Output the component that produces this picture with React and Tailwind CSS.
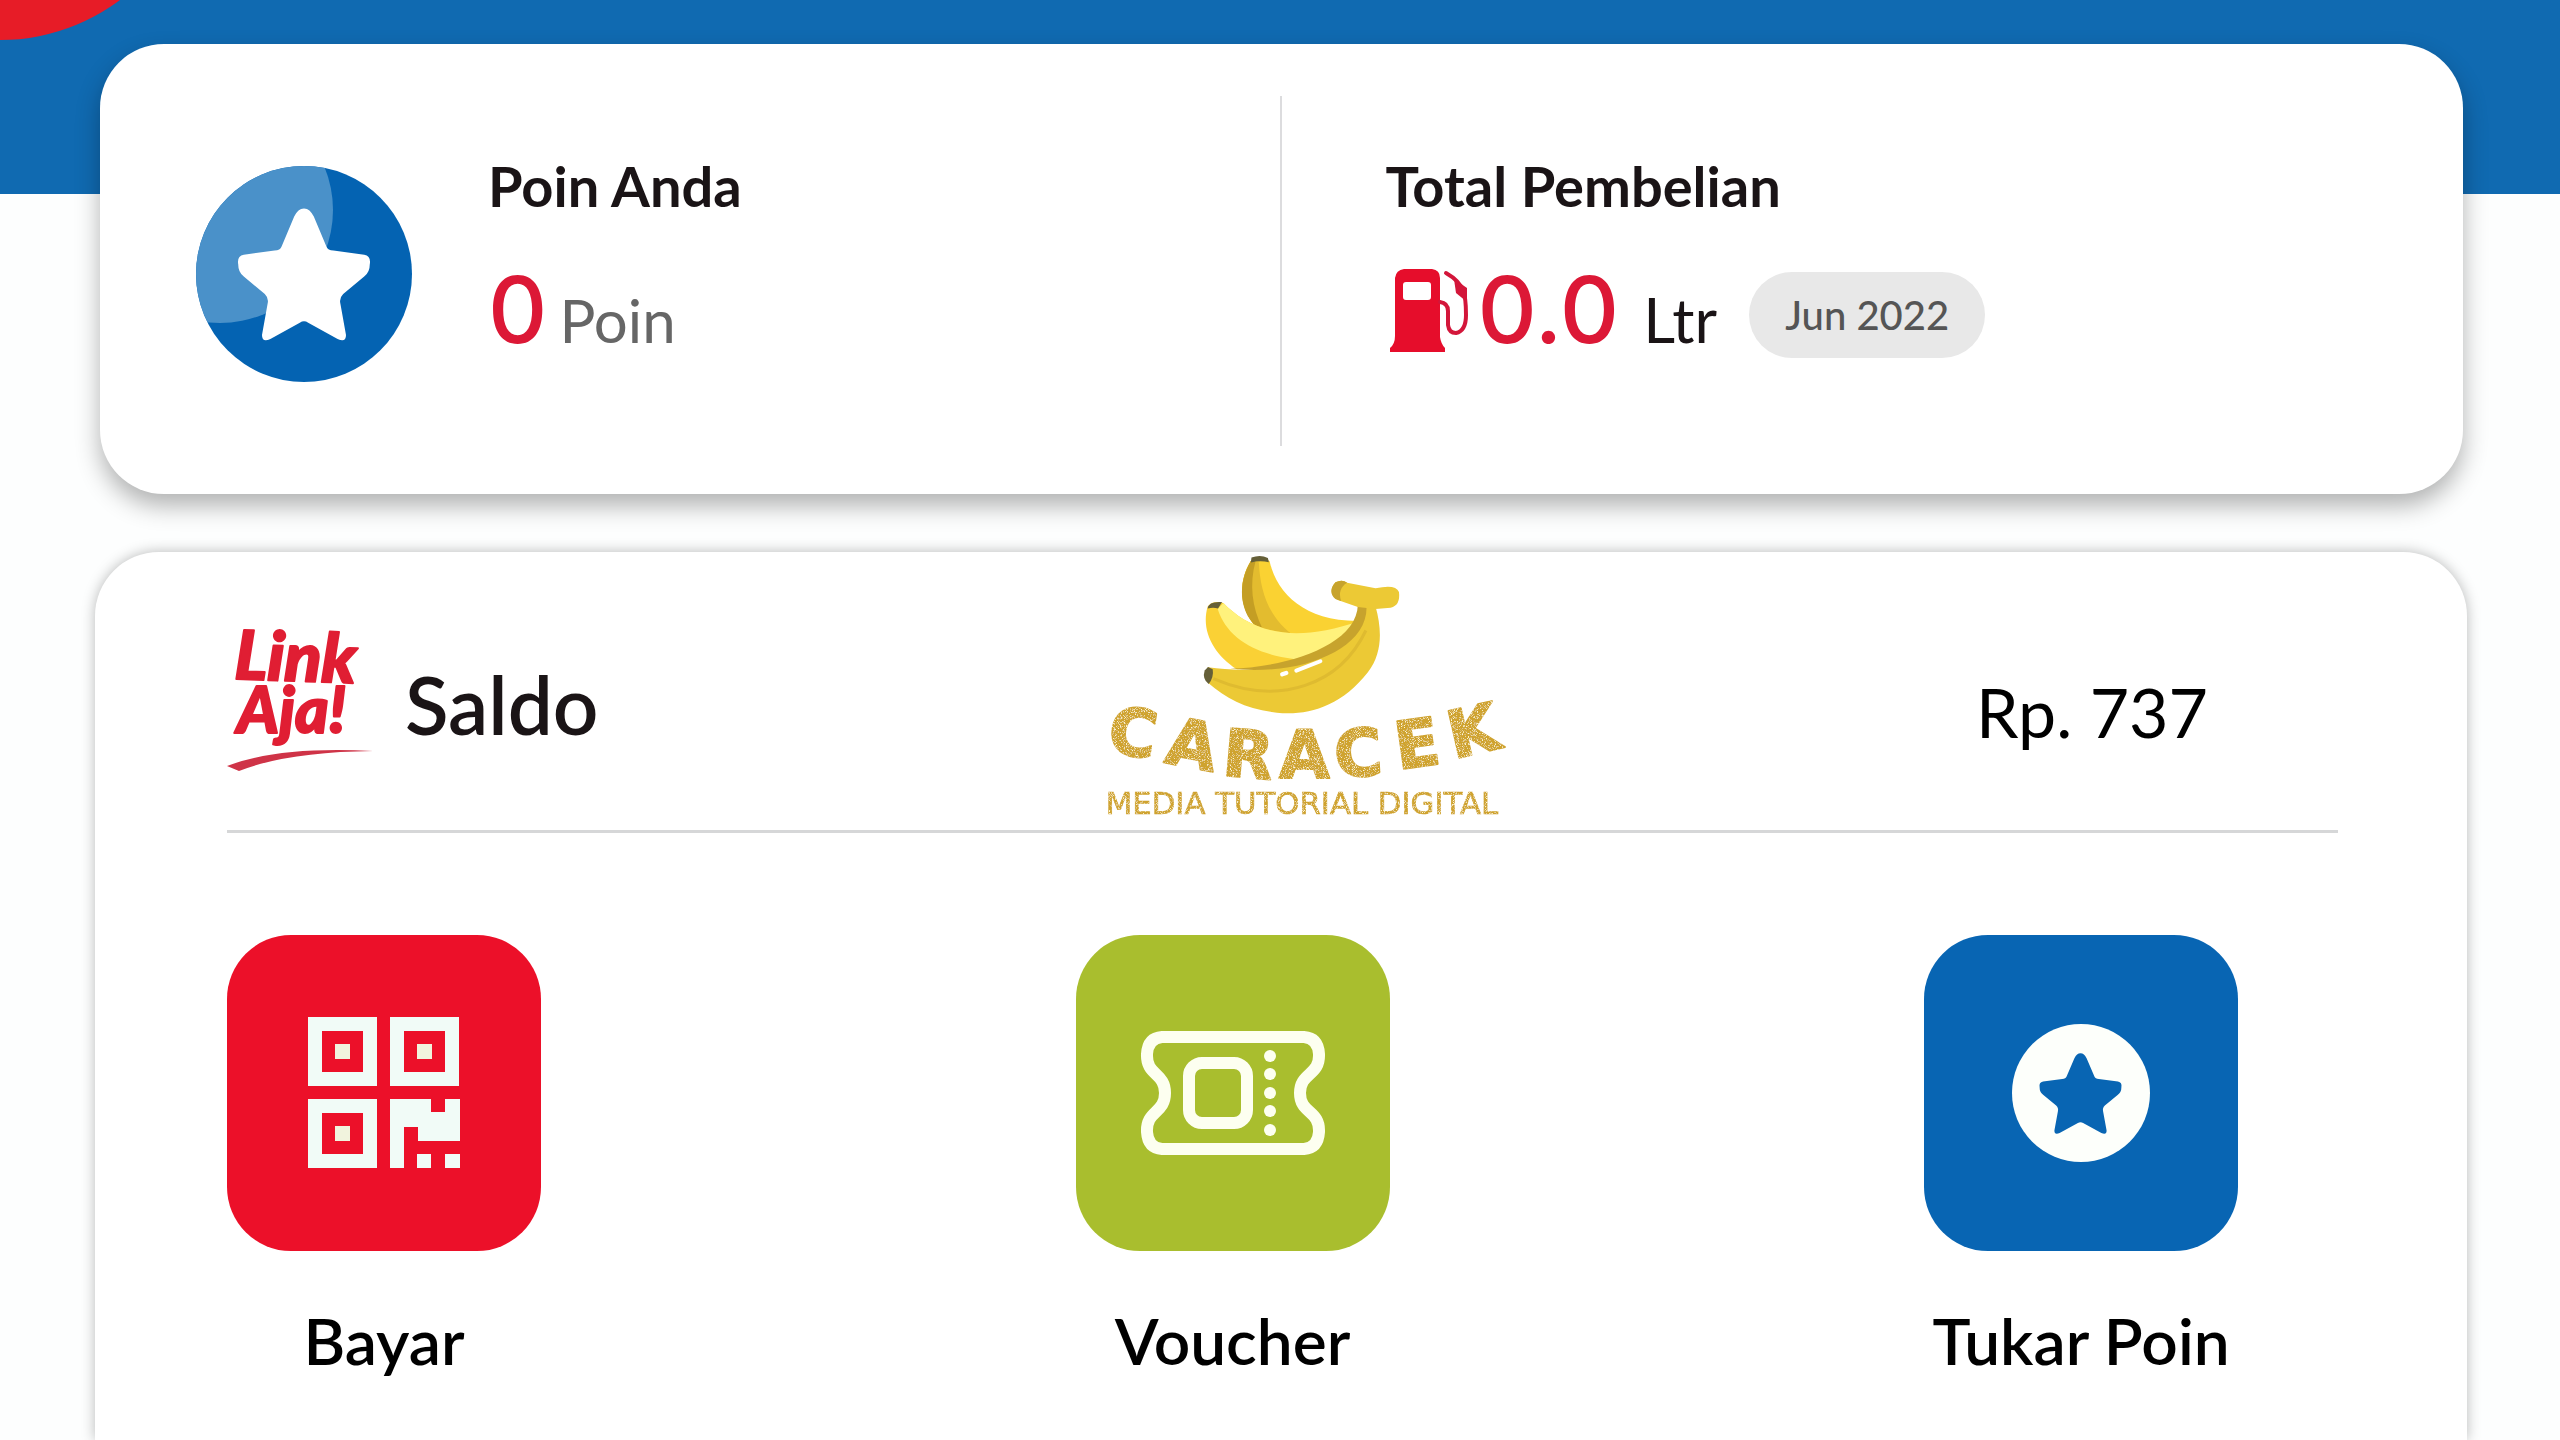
import React from "react";

const STAR =
  "M50 4 C53 4 55 6 57 10 L66 32 Q67 35 71 35 L93 38 Q98 39 97 45 Q97 51 93 54 L78 67 Q75 70 76 74 L80 97 Q80 103 74 100 L53 88 Q50 86 47 88 L26 100 Q20 103 20 97 L24 74 Q25 70 22 67 L7 54 Q3 51 3 45 Q2 39 7 38 L29 35 Q33 35 34 32 L43 10 C45 6 47 4 50 4 Z";

function PointBadge() {
  return (
    <svg viewBox="0 0 216 216" className="size-54 shrink-0" aria-hidden="true">
      <defs>
        <clipPath id="badge-disc">
          <circle cx="108" cy="108" r="108" />
        </clipPath>
      </defs>
      <circle cx="108" cy="108" r="108" fill="#0463b2" />
      <circle cx="24" cy="44" r="113" fill="#4a91c9" clipPath="url(#badge-disc)" />
      <path d={STAR} fill="#fff" transform="translate(38 37) scale(1.4 1.36)" />
    </svg>
  );
}

function FuelPump() {
  return (
    <svg viewBox="0 0 84 84" className="size-21 shrink-0" aria-hidden="true">
      <path
        fillRule="evenodd"
        fill="#e60d2b"
        d="M14 0 H42 Q50 1 50 9 V68 Q51 75 55 79 V83 H0 V79 Q5 75 5 67 V9 Q6 1 14 0 Z M16 13 Q13 13 13 16 V28 Q13 31 16 31 H38 Q41 31 41 28 V16 Q41 13 38 13 Z"
      />
      <path
        d="M50 33 Q58 34 58 42 V56 Q59 64 66 64 Q76 62 76 46 Q76 28 73 22 Q70 12 56 4"
        fill="none"
        stroke="#d3163a"
        strokeWidth="4"
        strokeLinecap="round"
      />
      <path d="M64 10 L77 19 V33 L66 24 Z" fill="#d3163a" />
    </svg>
  );
}

function LinkAjaLogo() {
  return (
    <svg viewBox="0 -30 150 180" className="h-45 w-37.5 shrink-0" role="img" aria-label="LinkAja!">
      <g
        fill="#e01e33"
        stroke="#e01e33"
        strokeWidth="2"
        strokeLinejoin="round"
        fontFamily="Lato, sans-serif"
        fontWeight="900"
        fontStyle="italic"
      >
        <text x="7" y="53" fontSize="68" transform="rotate(2 7 53)">Link</text>
        <text x="10" y="107" fontSize="64">Aja!</text>
      </g>
      <path d="M0 140 Q52 120 146 125 Q60 126 12 145 Z" fill="#cf3347" />
    </svg>
  );
}

function BananaLogo() {
  return (
    <svg viewBox="70 66 1220 800" className="h-67 w-102 shrink-0" role="img" aria-label="Caracek Media Tutorial Digital">
      <defs>
        <filter id="glitter" x="0" y="0" width="1" height="1">
          <feTurbulence type="fractalNoise" baseFrequency="0.45" numOctaves="2" seed="4" result="n" />
          <feColorMatrix in="n" values="0 0 0 0 1  0 0 0 0 0.95  0 0 0 0 0.68  4 0 0 0 -2.1" result="f" />
          <feComposite in="f" in2="SourceAlpha" operator="in" result="g" />
          <feMerge>
            <feMergeNode in="SourceGraphic" />
            <feMergeNode in="g" />
          </feMerge>
        </filter>
      </defs>
      {/* back banana */}
      <path d="M512 92 Q540 70 568 92 C590 190 670 270 830 272 L760 350 L640 322 L530 292 C480 240 470 160 512 92 Z" fill="#fad232" />
      <path d="M512 92 L536 96 C540 190 570 270 650 322 L530 292 C480 240 470 160 512 92 Z" fill="#e3bc2f" />
      <path d="M512 92 L526 94 C508 160 514 230 548 296 L526 286 C478 240 472 160 512 92 Z" fill="#c49e24" />
      <path d="M514 82 Q540 72 563 83 L566 96 Q540 90 512 97 Z" fill="#655f38" />
      {/* middle banana */}
      <path d="M383 228 Q400 208 430 218 C500 290 620 350 840 270 L780 350 L640 400 L470 416 C400 370 362 300 383 228 Z" fill="#fad135" />
      <path d="M430 218 C500 290 620 350 840 270 L790 335 C740 375 690 385 640 385 C520 370 440 320 413 236 Z" fill="#fff27c" />
      <path d="M383 234 Q386 212 426 215 L414 234 Q400 230 383 234 Z" fill="#655f38" />
      {/* front banana */}
      <path d="M384 410 C520 430 700 410 800 330 C840 290 835 250 832 225 L885 228 C905 300 905 370 862 425 C780 530 680 555 590 546 C500 535 440 505 384 456 Q368 430 384 410 Z" fill="#ecc935" />
      <path d="M450 414 C600 412 830 350 832 222 L858 226 C862 330 740 395 600 414 Q520 422 450 414 Z" fill="#c7a32d" />
      <path d="M400 444 C600 530 780 460 856 300" fill="none" stroke="#dfbb30" strokeWidth="9" />
      <path d="M384 409 L398 416 Q402 440 386 460 Q366 446 374 420 Z" fill="#655f38" />
      <path d="M648 420 L720 392" stroke="#fff" strokeWidth="12" strokeLinecap="round" />
      <path d="M606 431 L618 427" stroke="#fff" strokeWidth="13" strokeLinecap="round" />
      {/* stem */}
      <path d="M765 156 Q785 146 800 157 L885 174 Q945 160 955 185 Q960 225 930 232 L885 236 L832 230 L770 208 Q740 185 765 156 Z" fill="#ecc935" />
      <path d="M765 156 Q785 146 800 157 Q770 175 782 212 L765 206 Q740 185 765 156 Z" fill="#c7a32d" />
      <g fill="#cfa32f" stroke="#cfa32f" filter="url(#glitter)">
        <text
          x="78 250 424 596 766 952 1118"
          y="662 694 733 742 740 716 684"
          rotate="9 11 5 0 -4 -8 -13"
          fontFamily="DejaVu Sans, sans-serif"
          fontWeight="700"
          fontSize="196"
          strokeWidth="6"
          strokeLinejoin="round"
        >
          CARACEK
        </text>
        <text x="78" y="848" fontFamily="DejaVu Sans, sans-serif" fontSize="92" strokeWidth="2">
          MEDIA TUTORIAL DIGITAL
        </text>
      </g>
    </svg>
  );
}

function QrIcon() {
  const finders = [
    [0, 0],
    [82, 0],
    [0, 82],
  ];
  return (
    <svg viewBox="0 0 152 152" className="size-38" aria-hidden="true">
      {finders.map(([x, y]) => (
        <g key={`${x}-${y}`} transform={`translate(${x} ${y})`}>
          <rect x="7" y="7" width="55" height="55" fill="none" stroke="#f1fbf7" strokeWidth="14" />
          <rect x="27" y="27" width="15" height="15" fill="#f1f3dd" />
        </g>
      ))}
      <path d="M82 82 H123 V95 H137 V82 H152 V124 H110 V110 H96 V151 H82 Z M109 137 H123 V151 H109 Z M137 137 H152 V151 H137 Z" fill="#f1fbf7" />
    </svg>
  );
}

function VoucherIcon() {
  return (
    <svg viewBox="0 0 186 126" className="h-31.5 w-46.5" fill="none" stroke="#fdfff0" strokeWidth="12" aria-hidden="true">
      <path
        strokeLinejoin="round"
        d="M22 7 H164 Q178 8 179 24 C180 46 160 42 160 63 C160 84 180 80 179 102 Q178 118 164 119 H22 Q8 118 7 102 C6 80 25 84 25 63 C25 42 6 46 7 24 Q8 8 22 7 Z"
      />
      <rect x="49" y="33" width="58" height="60" rx="13" />
      {[26, 44, 63, 81, 100].map((y) => (
        <circle key={y} cx="130" cy={y} r="6" fill="#fdfff0" stroke="none" />
      ))}
    </svg>
  );
}

function StarIcon() {
  return (
    <svg viewBox="0 0 140 140" className="size-35" aria-hidden="true">
      <circle cx="70" cy="70" r="69" fill="#fdfffb" />
      <path d={STAR} fill="#0865b3" transform="translate(26 27) scale(0.87 0.83)" />
    </svg>
  );
}

const actions = [
  { label: "Bayar", tile: "bg-[#ec1029]", Icon: QrIcon },
  { label: "Voucher", tile: "bg-[#a9be2e]", Icon: VoucherIcon },
  { label: "Tukar Poin", tile: "bg-[#0865b3]", Icon: StarIcon },
];

export default function App() {
  return (
    <div className="flex min-h-screen flex-col overflow-hidden bg-[#fdfefe] font-[Lato,sans-serif] text-[#1a1416]">
      <header className="relative h-[194px] shrink-0 overflow-hidden bg-[#106ab1]">
        <div className="absolute -top-[360px] -left-[200px] size-[400px] rounded-full bg-[#e71c27]" />
      </header>

      <main className="relative -mt-[150px] flex grow flex-col gap-[58px]">
        <section className="mr-[97px] ml-[100px] grid grid-cols-2 rounded-[64px] bg-white pt-[52px] pb-[48px] shadow-[0_12px_24px_rgba(0,0,0,0.3)]">
          <div className="flex items-start gap-[76px] border-r-2 border-[#dcdcde] pt-[58px] pb-16 pl-24">
            <div className="pt-3">
              <PointBadge />
            </div>
            <div>
              <h2 className="text-[56px] leading-[64px] font-bold">Poin Anda</h2>
              <p className="mt-[44px] flex items-baseline gap-3 leading-[96px]">
                <span className="font-[Inter,sans-serif] text-[92px] font-medium text-[#dc1836]">0</span>
                <span className="text-[60px] text-[#666]">Poin</span>
              </p>
            </div>
          </div>
          <div className="pt-[58px] pl-[104px]">
            <h2 className="text-[56px] leading-[64px] font-bold">Total Pembelian</h2>
            <div className="mt-[44px] flex items-center">
              <span className="mr-1 ml-1 pb-2">
                <FuelPump />
              </span>
              <div className="flex items-baseline gap-6 leading-[96px]">
                <span className="font-[Inter,sans-serif] text-[92px] font-medium text-[#dc1836]">0.0</span>
                <span className="text-[62px]">Ltr</span>
              </div>
              <span className="ml-8 rounded-full bg-[#e8e8e8] px-9 text-[40px] leading-[86px] font-medium text-[#555]">
                Jun 2022
              </span>
            </div>
          </div>
        </section>

        <section className="mr-[93px] ml-[95px] grow rounded-t-[64px] bg-white pr-[129px] pl-[132px] shadow-[0_0_14px_rgba(0,0,0,0.28)]">
          <div className="flex items-start justify-between border-b-3 border-[#d6d7d8] pr-[130px] pb-[10px]">
            <div className="flex items-start gap-7 pt-[44px]">
              <LinkAjaLogo />
              <h2 className="pt-[60px] text-[80px] leading-[96px] font-semibold">Saldo</h2>
            </div>
            <div className="ml-10">
              <BananaLogo />
            </div>
            <p className="pt-[112px] text-[68px] leading-[96px] text-black">Rp. 737</p>
          </div>

          <div className="flex justify-between pt-[102px] pr-[100px]">
            {actions.map(({ label, tile, Icon }) => (
              <button key={label} type="button" className="flex w-[314px] flex-col items-center">
                <span className={`flex h-[316px] w-full items-center justify-center rounded-[64px] ${tile}`}>
                  <Icon />
                </span>
                <span className="mt-[50px] text-[64px] leading-[80px] font-semibold whitespace-nowrap text-black">
                  {label}
                </span>
              </button>
            ))}
          </div>
        </section>
      </main>
    </div>
  );
}
